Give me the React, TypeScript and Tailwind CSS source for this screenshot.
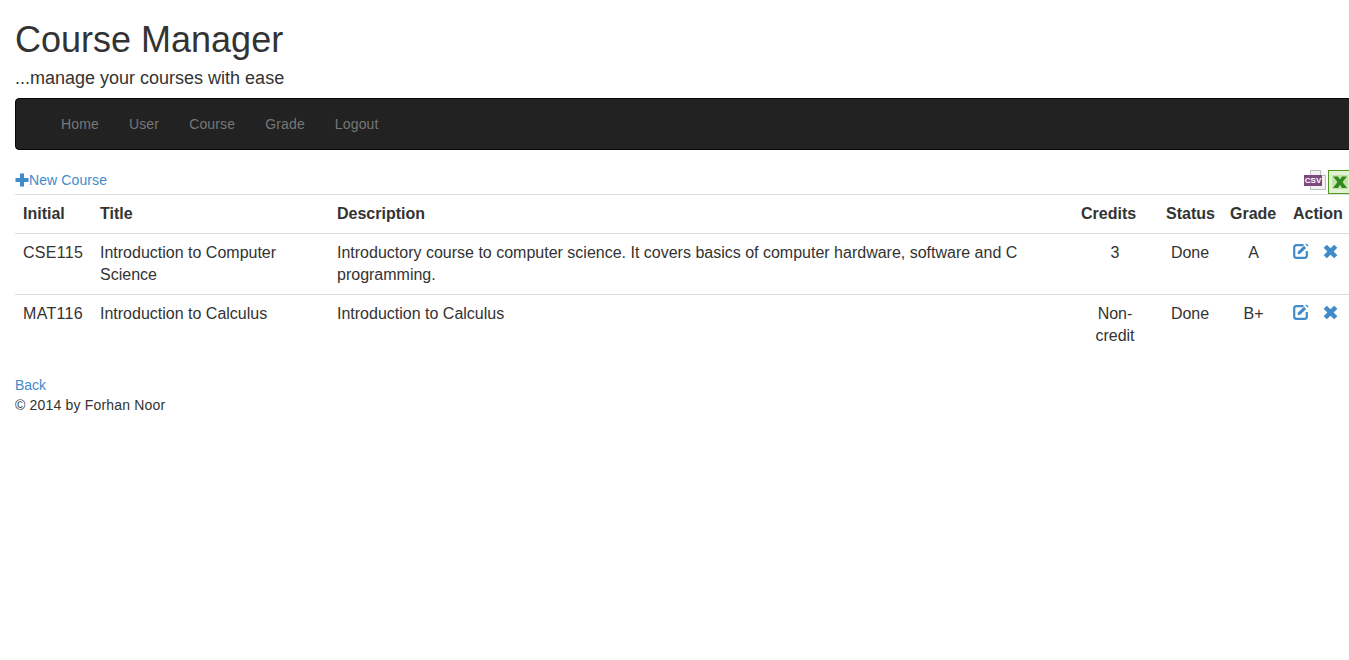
const NAV = ["Home", "User", "Course", "Grade", "Logout"];

const COURSES = [
  {
    initial: "CSE115",
    title: "Introduction to Computer Science",
    description:
      "Introductory course to computer science. It covers basics of computer hardware, software and C programming.",
    credits: "3",
    status: "Done",
    grade: "A",
  },
  {
    initial: "MAT116",
    title: "Introduction to Calculus",
    description: "Introduction to Calculus",
    credits: "Non-credit",
    status: "Done",
    grade: "B+",
  },
];

function PlusIcon() {
  return (
    <svg viewBox="0 0 14 14" width="14" height="14" className="block shrink-0" aria-hidden>
      <path d="M5 0.5h4v4.5h4.5v4H9v4.5H5V9H0.5V5H5z" fill="#428bca" />
    </svg>
  );
}

function EditIcon() {
  return (
    <svg viewBox="0 0 16 16" width="16" height="16" className="block" aria-hidden>
      <path
        d="M10.5 2.2H3.6A2.4 2.4 0 0 0 1.2 4.6v7.8a2.4 2.4 0 0 0 2.4 2.4h7.8a2.4 2.4 0 0 0 2.4-2.4V8"
        fill="none"
        stroke="#428bca"
        strokeWidth="2.2"
      />
      <path d="M5 8.6 11 2.8l2.2 2.2-6 5.8-2.6.4z" fill="#428bca" />
      <path d="M12.4 1.4l1-1 2.2 2.2-1 1z" fill="#428bca" />
    </svg>
  );
}

function RemoveIcon() {
  return (
    <svg viewBox="0 0 14 14" width="15" height="15" className="block" aria-hidden>
      <path
        d="M3.6 0.6 7 4l3.4-3.4 3 3L10 7l3.4 3.4-3 3L7 10l-3.4 3.4-3-3L4 7 .6 3.6z"
        fill="#428bca"
      />
    </svg>
  );
}

function CsvIcon() {
  return (
    <div className="relative h-5 w-[22px]">
      <svg viewBox="0 0 16 20" width="16" height="20" className="absolute right-0 top-0" aria-hidden>
        <path d="M.5.5h10l5 5v14H.5z" fill="#f1f1f1" stroke="#bdbdbd" />
        <path d="M10.5.5v5h5" fill="#fff" stroke="#bdbdbd" />
      </svg>
      <span className="absolute left-0 top-[5px] h-[11px] w-[18px] bg-[#7d4a80] text-center font-['Liberation_Sans',sans-serif] text-[8px] font-bold leading-[11px] text-white">
        CSV
      </span>
    </div>
  );
}

function ExcelIcon() {
  return (
    <div className="h-[24px] w-[24px] shrink-0 border border-[#4f9a1f] bg-[#e3f1d3] p-[3px]">
      <svg viewBox="0 0 16 16" width="16" height="16" className="block" aria-hidden>
        <rect x="0" y="1" width="16" height="14" fill="#c6e2a8" />
        <path d="M1 2.5h5l2 3 2-3h5l-4.5 5.5 4.5 6h-5l-2-3.2L6 14H1l4.5-6z" fill="#2f8a1e" />
      </svg>
    </div>
  );
}

export default function App() {
  return (
    <div className="min-h-[660px] overflow-hidden bg-white pl-[15px] font-['Liberation_Sans',Arial,sans-serif] text-[14px] leading-[20px] text-[#333]">
      <h1 className="pt-5 text-[36px] leading-[40px] font-normal">Course Manager</h1>
      <h4 className="mt-2 text-[18px] leading-[20px] font-normal">...manage your courses with ease</h4>

      <nav className="mt-[10px] flex h-[52px] w-[1345px] items-center rounded border border-[#080808] bg-[#222] pl-[30px]">
        {NAV.map((item) => (
          <a key={item} href="#" className="px-[15px] tracking-[0.15px] text-[#777]">
            {item}
          </a>
        ))}
      </nav>

      <div className="mt-[19px] flex h-[25px] w-[1337px] items-start justify-between">
        <a href="#" className="mt-px flex items-center tracking-[0.1px] text-[#428bca]">
          <PlusIcon />
          New Course
        </a>
        <div className="mt-px flex items-start gap-[2px]">
          <CsvIcon />
          <ExcelIcon />
        </div>
      </div>

      <table className="w-[1336px] table-fixed border-collapse text-[16px] leading-[22px]">
        <colgroup>
          <col className="w-[77px]" />
          <col className="w-[237px]" />
          <col className="w-[744px]" />
          <col className="w-[85px]" />
          <col className="w-[64px]" />
          <col className="w-[63px]" />
          <col className="w-[66px]" />
        </colgroup>
        <thead>
          <tr className="border-t border-[#ddd] text-left">
            {["Initial", "Title", "Description", "Credits", "Status", "Grade", "Action"].map((h) => (
              <th key={h} className="p-2 font-bold">
                {h}
              </th>
            ))}
          </tr>
        </thead>
        <tbody>
          {COURSES.map((c) => (
            <tr key={c.initial} className="border-t border-[#ddd] align-top">
              <td className="p-2 tracking-[0.3px]">{c.initial}</td>
              <td className="p-2">{c.title}</td>
              <td className="p-2">{c.description}</td>
              <td className="py-2 pr-[21px] pl-5 text-center">{c.credits}</td>
              <td className="p-2 text-center">{c.status}</td>
              <td className="p-2 text-center">{c.grade}</td>
              <td className="p-2">
                <div className="flex items-center gap-[14px] pt-px">
                  <EditIcon />
                  <RemoveIcon />
                </div>
              </td>
            </tr>
          ))}
        </tbody>
      </table>

      <div className="mt-5">
        <a href="#" className="text-[#428bca]">
          Back
        </a>
      </div>
      <p className="tracking-[0.18px]">© 2014 by Forhan Noor</p>
    </div>
  );
}
